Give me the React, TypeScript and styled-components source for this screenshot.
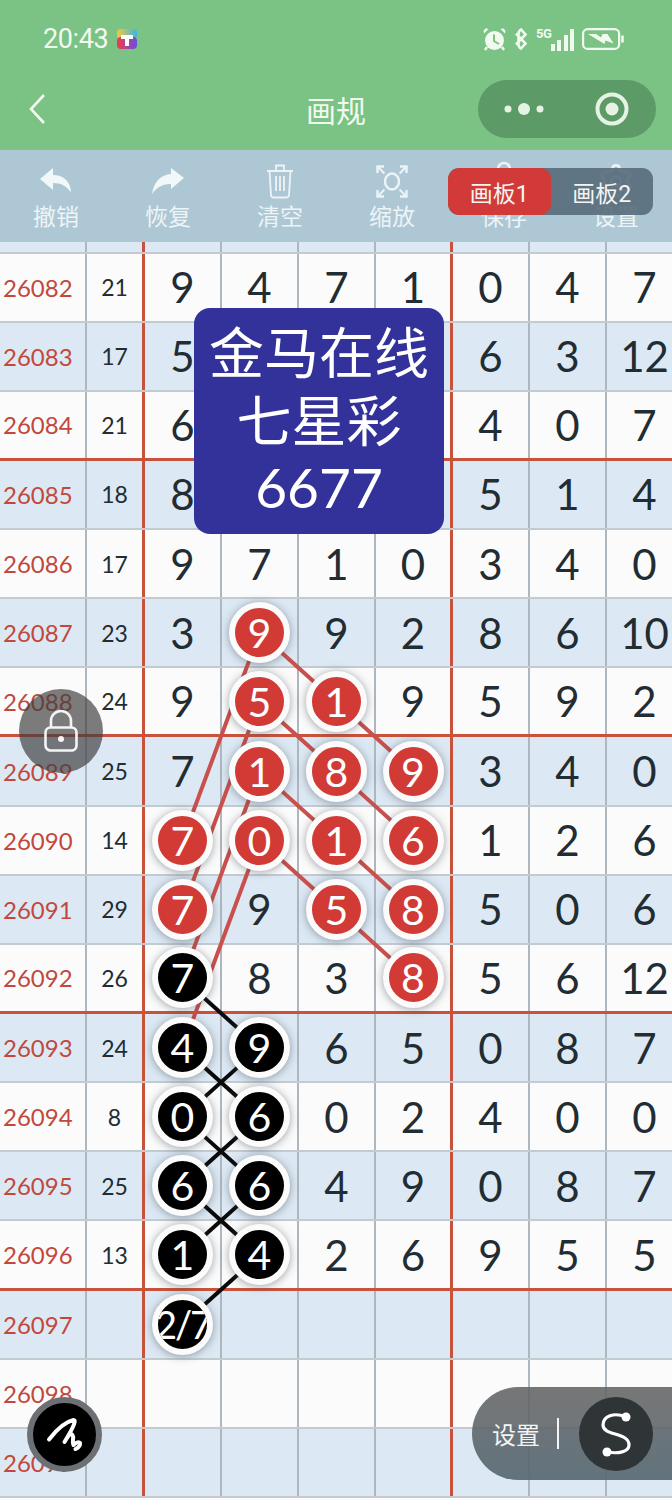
import React from "react";
import styled, { createGlobalStyle } from "styled-components";
import { Settings } from "lucide-react";

const ROW_H = 69.15;
const STUB = 11.5;
const CENTERS = [182.5, 259.5, 336.5, 413];

const Global = createGlobalStyle`
  html, body { margin: 0; padding: 0; background: #fbfbfb; }
  body { font-family: Lato, "Noto Sans CJK SC", sans-serif; }
`;

const Page = styled.div`
  position: relative;
  width: 672px;
  height: 1500px;
  overflow: hidden;
`;

const StatusBar = styled.div`
  box-sizing: border-box;
  height: 78px;
  background: #7bc285;
  display: flex;
  align-items: center;
  justify-content: space-between;
  padding: 0 48px 0 43px;
  color: #f2f9ef;
`;
const StatusLeft = styled.div`
  display: flex;
  align-items: center;
  gap: 9px;
`;
const Time = styled.span`
  font-family: Roboto, sans-serif;
  font-size: 27px;
  line-height: 30px;
  letter-spacing: -0.4px;
`;
const StatusRight = styled.div`
  display: flex;
  align-items: center;
  gap: 8px;
`;
const FiveG = styled.div`
  position: relative;
  display: flex;
  align-items: flex-end;
  justify-content: flex-end;
  gap: 2.5px;
  width: 38px;
  height: 23px;
`;
const FiveGLabel = styled.span`
  position: absolute;
  left: 0;
  top: -1px;
  font-family: Roboto, sans-serif;
  font-size: 13px;
  line-height: 13px;
  font-weight: 700;
  letter-spacing: -0.5px;
`;
const Bar = styled.i<{ $h: number }>`
  display: block;
  width: 4px;
  height: ${(p) => p.$h}px;
  background: #f2f9ef;
`;

const NavBar = styled.div`
  box-sizing: border-box;
  height: 72px;
  background: #7bc285;
  display: grid;
  grid-template-columns: 1fr auto 1fr;
  align-items: start;
  padding: 2px 16px 0 16px;
  color: #f2f9ef;
`;
const Back = styled.div`
  height: 58px;
  margin-left: 12px;
  display: flex;
  align-items: center;
`;
const Title = styled.div`
  font-family: "Noto Sans CJK SC", sans-serif;
  font-size: 30px;
  line-height: 58px;
`;
const Capsule = styled.div`
  justify-self: end;
  width: 178px;
  height: 58px;
  border-radius: 29px;
  background: #5c9b67;
  display: flex;
  align-items: center;
  justify-content: space-between;
  padding: 0 27px 0 26px;
  box-sizing: border-box;
`;

const Toolbar = styled.div`
  position: relative;
  box-sizing: border-box;
  height: 92px;
  background: #adc7d5;
  display: grid;
  grid-template-columns: repeat(6, 112px);
`;
const Tool = styled.div`
  display: flex;
  flex-direction: column;
  align-items: center;
  color: #edf4f6;
  padding-top: 11px;
`;
const ToolIcon = styled.div`
  height: 40px;
  display: flex;
  align-items: center;
  justify-content: center;
`;
const ToolLabel = styled.span`
  font-family: "Noto Sans CJK SC", sans-serif;
  font-size: 23px;
  line-height: 30px;
  margin-top: -1px;
`;
const Segment = styled.div`
  position: absolute;
  left: 448px;
  top: 18px;
  width: 205px;
  height: 47px;
  border-radius: 11px;
  background: rgba(88, 108, 122, 0.9);
  display: flex;
  overflow: hidden;
`;
const SegmentItem = styled.div<{ $active?: boolean }>`
  flex: 1;
  display: flex;
  align-items: center;
  justify-content: center;
  border-radius: 11px;
  background: ${(p) => (p.$active ? "#d13a38" : "transparent")};
  color: #f6f4f2;
  font-family: Roboto, "Noto Sans CJK SC", sans-serif;
  font-size: 23px;
`;

const Table = styled.div`
  position: relative;
`;
const RowBox = styled.div<{ $blue: boolean; $thick: boolean; $stub?: boolean }>`
  box-sizing: border-box;
  height: ${(p) => (p.$stub ? `${STUB}px` : `${ROW_H}px`)};
  display: grid;
  grid-template-columns: 87px 58px repeat(7, 77px);
  background: ${(p) => (p.$blue ? "#dce9f4" : "#fbfbfb")};
  border-bottom: ${(p) => (p.$thick ? "3px solid #c8533a" : "2px solid #c3cbd0")};
`;
const Cell = styled.div<{ $red?: boolean }>`
  box-sizing: border-box;
  display: flex;
  align-items: center;
  justify-content: center;
  border-right: ${(p) => (p.$red ? "3px solid #c8533a" : "2px solid #aeb7bd")};
  font-size: 42px;
  color: #222c33;
  min-width: 0;
`;
const IssueCell = styled(Cell)`
  justify-content: flex-start;
  padding-left: 3px;
  font-size: 24px;
  color: #c2483c;
`;
const SumCell = styled(Cell)`
  font-size: 23px;
`;
const Ball = styled.div<{ $kind: "red" | "black"; $small?: boolean }>`
  position: relative;
  z-index: 2;
  flex: none;
  box-sizing: border-box;
  width: 61px;
  height: 61px;
  border-radius: 50%;
  border: 6px solid #fbfbfb;
  background: ${(p) => (p.$kind === "red" ? "#d13a35" : "#000")};
  color: #fff;
  display: flex;
  align-items: center;
  justify-content: center;
  font-size: ${(p) => (p.$small ? "38px" : "41px")};
  letter-spacing: ${(p) => (p.$small ? "-2px" : "0")};
  white-space: nowrap;
  overflow: hidden;
  box-shadow: 0 1px 9px rgba(60, 70, 80, 0.5);
`;
const Lines = styled.svg`
  position: absolute;
  left: 0;
  top: 0;
  z-index: 1;
  pointer-events: none;
`;

const Notice = styled.div`
  position: absolute;
  left: 194px;
  top: 308px;
  width: 250px;
  height: 226px;
  z-index: 3;
  box-sizing: border-box;
  padding-top: 11px;
  border-radius: 16px;
  background: #32329a;
  color: #fff;
  text-align: center;
  font-family: Lato, "Noto Sans CJK SC", sans-serif;
  font-size: 55px;
  line-height: 67.5px;
`;
const LockButton = styled.div`
  position: absolute;
  left: 19px;
  top: 689px;
  width: 84px;
  height: 84px;
  z-index: 4;
  border-radius: 50%;
  background: rgba(62, 62, 62, 0.68);
  display: flex;
  align-items: center;
  justify-content: center;
`;
const PenButton = styled.div`
  position: absolute;
  left: 27px;
  top: 1397px;
  z-index: 4;
  box-sizing: border-box;
  width: 75px;
  height: 75px;
  border-radius: 50%;
  background: #000;
  border: 6.5px solid #6c7074;
  display: flex;
  align-items: center;
  justify-content: center;
`;
const SettingsPill = styled.div`
  position: absolute;
  right: 0;
  top: 1387px;
  z-index: 4;
  box-sizing: border-box;
  width: 200px;
  height: 93px;
  border-radius: 46.5px 0 0 46.5px;
  background: linear-gradient(180deg, rgba(100, 100, 100, 0.88), rgba(88, 105, 115, 0.92));
  display: flex;
  align-items: center;
  padding-left: 20px;
  color: #f2f4f5;
`;
const PillText = styled.span`
  font-family: "Noto Sans CJK SC", sans-serif;
  font-size: 24px;
`;
const PillDivider = styled.div`
  width: 2px;
  height: 31px;
  margin: 0 0 0 17px;
  background: #f2f4f5;
`;
const PillIcon = styled.div`
  width: 74px;
  height: 74px;
  margin-left: 20px;
  border-radius: 50%;
  background: #2f3437;
  display: flex;
  align-items: center;
  justify-content: center;
`;

type V = string | [string, "r" | "k"];
const R = (s: string): V => [s, "r"];
const K = (s: string): V => [s, "k"];

// The notice card hides three columns of rows 26083-26085 in the reference.
const ROWS: { id: number; sum: string; vals: V[] }[] = [
  { id: 26082, sum: "21", vals: ["9", "4", "7", "1", "0", "4", "7"] },
  { id: 26083, sum: "17", vals: ["5", "", "", "", "6", "3", "12"] },
  { id: 26084, sum: "21", vals: ["6", "", "", "", "4", "0", "7"] },
  { id: 26085, sum: "18", vals: ["8", "", "", "", "5", "1", "4"] },
  { id: 26086, sum: "17", vals: ["9", "7", "1", "0", "3", "4", "0"] },
  { id: 26087, sum: "23", vals: ["3", R("9"), "9", "2", "8", "6", "10"] },
  { id: 26088, sum: "24", vals: ["9", R("5"), R("1"), "9", "5", "9", "2"] },
  { id: 26089, sum: "25", vals: ["7", R("1"), R("8"), R("9"), "3", "4", "0"] },
  { id: 26090, sum: "14", vals: [R("7"), R("0"), R("1"), R("6"), "1", "2", "6"] },
  { id: 26091, sum: "29", vals: [R("7"), "9", R("5"), R("8"), "5", "0", "6"] },
  { id: 26092, sum: "26", vals: [K("7"), "8", "3", R("8"), "5", "6", "12"] },
  { id: 26093, sum: "24", vals: [K("4"), K("9"), "6", "5", "0", "8", "7"] },
  { id: 26094, sum: "8", vals: [K("0"), K("6"), "0", "2", "4", "0", "0"] },
  { id: 26095, sum: "25", vals: [K("6"), K("6"), "4", "9", "0", "8", "7"] },
  { id: 26096, sum: "13", vals: [K("1"), K("4"), "2", "6", "9", "5", "5"] },
  { id: 26097, sum: "", vals: [K("2/7"), "", "", "", "", "", ""] },
  { id: 26098, sum: "", vals: ["", "", "", "", "", "", ""] },
  { id: 26099, sum: "", vals: ["", "", "", "", "", "", ""] },
];

type P = [number, number];
const RED_LINES: [P, P][] = [
  [[5, 1], [6, 2]], [[6, 2], [7, 3]],
  [[6, 1], [7, 2]], [[7, 2], [8, 3]],
  [[7, 1], [8, 2]], [[8, 2], [9, 3]],
  [[8, 1], [9, 2]], [[9, 2], [10, 3]],
  [[5, 1], [8, 0]], [[6, 1], [9, 0]], [[7, 1], [10, 0]], [[8, 1], [11, 0]],
];
const BLACK_LINES: [P, P][] = [
  [[10, 0], [11, 1]],
  [[11, 0], [12, 1]], [[11, 1], [12, 0]],
  [[12, 0], [13, 1]], [[12, 1], [13, 0]],
  [[13, 0], [14, 1]], [[13, 1], [14, 0]],
  [[14, 1], [15, 0]],
];

const px = (p: P) => ({ x: CENTERS[p[1]], y: STUB + p[0] * ROW_H + (ROW_H - 2) / 2 });

const LineSet = ({ items, color }: { items: [P, P][]; color: string }) => (
  <>
    {items.map(([a, b], i) => {
      const s = px(a);
      const e = px(b);
      return <line key={i} x1={s.x} y1={s.y} x2={e.x} y2={e.y} stroke={color} strokeWidth={4} />;
    })}
  </>
);

const AppTile = () => (
  <svg width="20" height="20" viewBox="0 0 20 20">
    <defs>
      <linearGradient id="tileTop" x1="0" x2="1">
        <stop offset="0" stopColor="#f7c83a" />
        <stop offset="1" stopColor="#37b6e8" />
      </linearGradient>
      <linearGradient id="tileBottom" x1="0" x2="1">
        <stop offset="0" stopColor="#f23a4c" />
        <stop offset="1" stopColor="#6a4fe0" />
      </linearGradient>
    </defs>
    <rect width="20" height="10" y="0" rx="4" fill="url(#tileTop)" />
    <rect width="20" height="12" y="8" rx="4" fill="url(#tileBottom)" />
    <path d="M4 6h12v4h-4v7H8v-7H4z" fill="#fff" />
  </svg>
);

const AlarmIcon = () => (
  <svg width="23" height="25" viewBox="0 0 23 25" fill="#f2f9ef">
    <circle cx="11.5" cy="13.5" r="9.5" />
    <path d="M1 6.5 5.5 2 2.8 1.2.6 3.4zM22 6.5 17.5 2l2.7-.8 2.2 2.2z" />
    <path d="M4 20l-2 3M19 20l2 3" stroke="#f2f9ef" strokeWidth="2.4" />
    <path d="M11 7.5v6.5l5 3" stroke="#7bc285" strokeWidth="2" fill="none" />
  </svg>
);
const BluetoothIcon = () => (
  <svg width="14" height="24" viewBox="0 0 14 24" fill="none" stroke="#f2f9ef" strokeWidth="2.6">
    <path d="M2 6.5 11.5 16.5 7 21.5q-2.5-1-2.5-4.5V7q0-3 2.5-4.5l4.5 5L2 17.5" />
  </svg>
);
const BatteryIcon = () => (
  <svg width="42" height="22" viewBox="0 0 42 22" fill="none">
    <rect x="1.1" y="1.1" width="36" height="19.8" rx="4.5" stroke="#f2f9ef" strokeWidth="2.2" />
    <path d="M40.500 7.500v7" stroke="#f2f9ef" strokeWidth="2.6" />
    <path d="M6 6h8l5 3.500 1.500-3.500h5l6 9.500-8-3-1 3.500z" fill="#f2f9ef" />
  </svg>
);
const BackIcon = () => (
  <svg width="18" height="32" viewBox="0 0 18 32" fill="none" stroke="#f2f9ef" strokeWidth="2.6">
    <path d="M16 2 3 16l13 14" />
  </svg>
);
const DotsIcon = () => (
  <svg width="40" height="14" viewBox="0 0 40 14" fill="#e6f3e2">
    <circle cx="4" cy="7" r="3.5" />
    <circle cx="20" cy="7" r="6" />
    <circle cx="36" cy="7" r="3.5" />
  </svg>
);
const TargetIcon = () => (
  <svg width="34" height="34" viewBox="0 0 34 34" fill="none">
    <circle cx="17" cy="17" r="14.5" stroke="#e6f3e2" strokeWidth="4" />
    <circle cx="17" cy="17" r="6.5" fill="#e6f3e2" />
  </svg>
);
const UndoIcon = () => (
  <svg width="32" height="26" viewBox="0 0 32 26" fill="#f2f7f8">
    <path d="M0 11 13 0v7c11 0 18 7 18 18-4-7-10-10-18-10v7z" />
  </svg>
);
const RedoIcon = () => (
  <svg width="32" height="26" viewBox="0 0 32 26" fill="#f2f7f8">
    <path d="M32 10 19 0v6C9 7 2 13 0 26c5-7 11-10 19-10v5z" />
  </svg>
);
const TrashIcon = () => (
  <svg width="28" height="35" viewBox="0 0 28 35" fill="none" stroke="#edf4f6" strokeWidth="1.8">
    <path d="M1 7h26M10 7V1.500h8V7M3.500 7l1.500 24q.2 2.500 2.500 2.500h13q2.300 0 2.500-2.500l1.500-24M10 12v15M14 12v15M18 12v15" />
  </svg>
);
const ZoomIcon = () => (
  <svg width="32" height="33" viewBox="0 0 32 33" fill="none" stroke="#edf4f6" strokeWidth="2.4">
    <path d="M1.500 8V1.500H8M24 1.500h6.500V8M1.500 25v6.500H8M24 31.500h6.500V25" />
    <path d="M2.500 2.500l6 6M29.500 2.500l-6 6M2.500 30.500l6-6M29.500 30.500l-6-6" strokeWidth="2" />
    <ellipse cx="16" cy="16.5" rx="7" ry="8" />
  </svg>
);
const SaveIcon = () => (
  <svg width="30" height="40" viewBox="0 0 30 40" fill="none" stroke="#edf4f6" strokeWidth="2.6">
    <circle cx="15" cy="8" r="6" />
    <path d="M15 14v16M6 25l9 9 9-9" />
  </svg>
);
const LockIcon = () => (
  <svg width="34" height="42" viewBox="0 0 34 42" fill="none" stroke="#f4f4f4" strokeWidth="2.6">
    <path d="M7 18v-7a10 10 0 0 1 20 0v7" />
    <rect x="1.500" y="17.500" width="31" height="23" rx="5" />
    <circle cx="17" cy="29" r="3" fill="#f4f4f4" stroke="none" />
  </svg>
);
const PenIcon = () => (
  <svg width="62" height="62" viewBox="13.5 14 62 62" fill="none" stroke="#fff" strokeWidth="4" strokeLinecap="round" strokeLinejoin="round">
    <path d="M28.500 49.500C35 41 44 32 53 30c4 0-3 12-9 22 3-5 6-10 8-7 2 3-1 6 1 10 2-2 5-4 6.500-2 .5 3-2.500 5-4.500 6" />
  </svg>
);
const SIcon = () => (
  <svg width="34" height="46" viewBox="0 0 34 46" fill="none" stroke="#fff" strokeWidth="3.2">
    <path d="M27 6C15 1 4 5 4 14c0 11 26 7 26 20 0 7-11 9-22 7" />
    <circle cx="27" cy="6" r="4.500" fill="#fff" stroke="none" />
    <circle cx="8" cy="41" r="4.500" fill="#fff" stroke="none" />
  </svg>
);

const renderValue = (v: V) => {
  if (typeof v === "string") return v;
  return (
    <Ball $kind={v[1] === "r" ? "red" : "black"} $small={v[0].length > 1}>
      {v[0]}
    </Ball>
  );
};

const TOOLS = [
  { label: "撤销", icon: <UndoIcon /> },
  { label: "恢复", icon: <RedoIcon /> },
  { label: "清空", icon: <TrashIcon /> },
  { label: "缩放", icon: <ZoomIcon /> },
  { label: "保存", icon: <SaveIcon /> },
  { label: "设置", icon: <Settings size={38} strokeWidth={1.5} /> },
];

export default function App() {
  const height = STUB + ROWS.length * ROW_H;
  return (
    <Page>
      <Global />
      <StatusBar>
        <StatusLeft>
          <Time>20:43</Time>
          <AppTile />
        </StatusLeft>
        <StatusRight>
          <AlarmIcon />
          <BluetoothIcon />
          <FiveG>
            <FiveGLabel>5G</FiveGLabel>
            <Bar $h={7} />
            <Bar $h={11} />
            <Bar $h={16} />
            <Bar $h={22} />
          </FiveG>
          <BatteryIcon />
        </StatusRight>
      </StatusBar>
      <NavBar>
        <Back>
          <BackIcon />
        </Back>
        <Title>画规</Title>
        <Capsule>
          <DotsIcon />
          <TargetIcon />
        </Capsule>
      </NavBar>
      <Toolbar>
        {TOOLS.map((t) => (
          <Tool key={t.label}>
            <ToolIcon>{t.icon}</ToolIcon>
            <ToolLabel>{t.label}</ToolLabel>
          </Tool>
        ))}
        <Segment>
          <SegmentItem $active>画板1</SegmentItem>
          <SegmentItem>画板2</SegmentItem>
        </Segment>
      </Toolbar>
      <Table>
        <RowBox $blue $thick={false} $stub>
          {Array.from({ length: 9 }, (_, i) => (
            <Cell key={i} $red={i === 1 || i === 5} />
          ))}
        </RowBox>
        {ROWS.map((row, r) => (
          <RowBox key={row.id} $blue={row.id % 2 === 1} $thick={r % 4 === 2 && r < 16}>
            <IssueCell>{row.id}</IssueCell>
            <SumCell $red>{row.sum}</SumCell>
            {row.vals.map((v, i) => (
              <Cell key={i} $red={i === 3}>
                {renderValue(v)}
              </Cell>
            ))}
          </RowBox>
        ))}
        <Lines width="672" height={height}>
          <LineSet items={RED_LINES} color="#c9504c" />
          <LineSet items={BLACK_LINES} color="#0a0a0a" />
        </Lines>
      </Table>
      <Notice>
        金马在线
        <br />
        七星彩
        <br />
        6677
      </Notice>
      <LockButton>
        <LockIcon />
      </LockButton>
      <PenButton>
        <PenIcon />
      </PenButton>
      <SettingsPill>
        <PillText>设置</PillText>
        <PillDivider />
        <PillIcon>
          <SIcon />
        </PillIcon>
      </SettingsPill>
    </Page>
  );
}
